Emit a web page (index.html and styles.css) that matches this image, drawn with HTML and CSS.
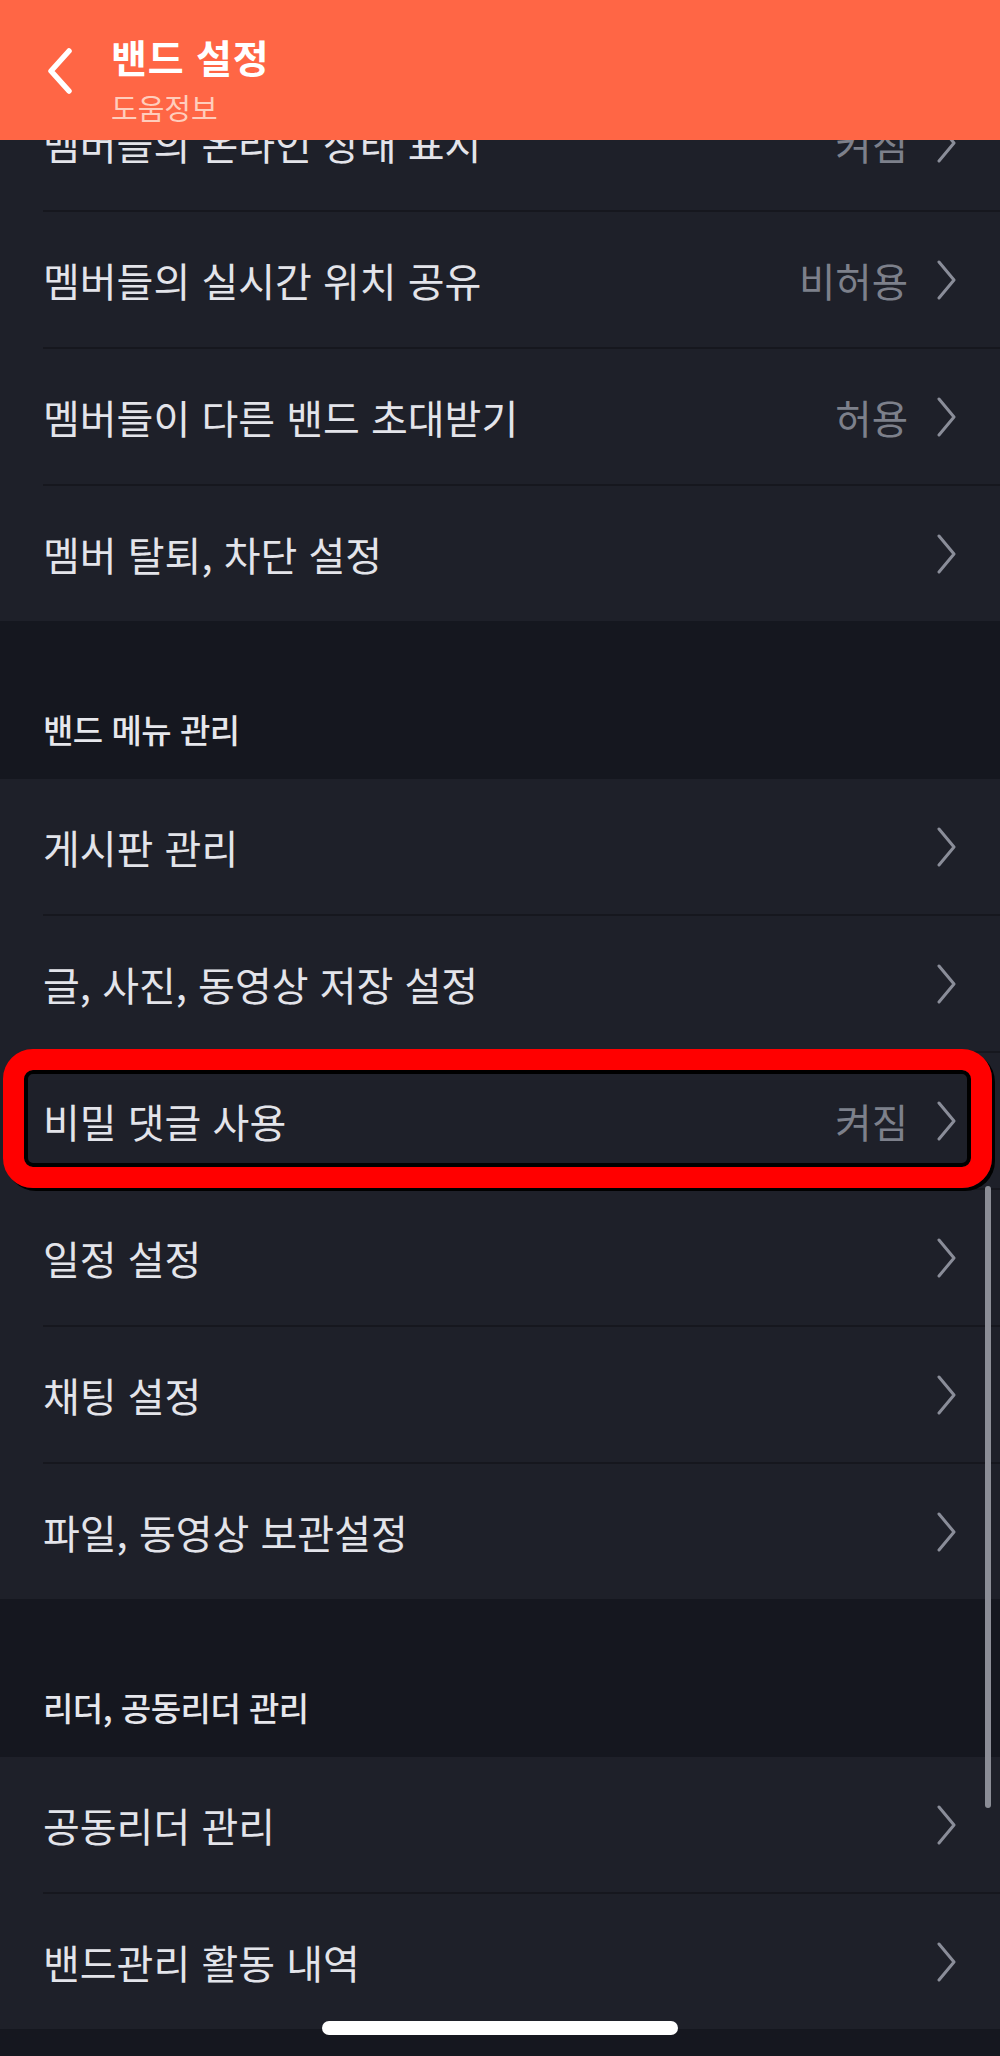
FILE: index.html
```html
<!DOCTYPE html>
<html lang="ko">
<head>
<meta charset="utf-8">
<title>밴드 설정</title>
<link rel="stylesheet" href="styles.css">
</head>
<body>
<header class="topbar">
  <svg class="back" width="26" height="46" viewBox="0 0 26 46"><polyline points="22,3 4,23 22,43" fill="none" stroke="#ffffff" stroke-width="5.5" stroke-linecap="round" stroke-linejoin="round"/></svg>
  <div class="titles">
    <div class="title">밴드 설정</div>
    <div class="subtitle">도움정보</div>
  </div>
</header>

<main class="page">
  <section class="group">
    <div class="row"><span class="label">멤버들의 온라인 상태 표시</span><span class="value">켜짐</span><svg class="chev" width="22" height="40" viewBox="0 0 22 40"><polyline points="4,2 19,20 4,38" fill="none" stroke="#8a8d99" stroke-width="3" stroke-linecap="round" stroke-linejoin="round"/></svg></div>
    <div class="row"><span class="label">멤버들의 실시간 위치 공유</span><span class="value">비허용</span><svg class="chev" width="22" height="40" viewBox="0 0 22 40"><polyline points="4,2 19,20 4,38" fill="none" stroke="#8a8d99" stroke-width="3" stroke-linecap="round" stroke-linejoin="round"/></svg></div>
    <div class="row"><span class="label">멤버들이 다른 밴드 초대받기</span><span class="value">허용</span><svg class="chev" width="22" height="40" viewBox="0 0 22 40"><polyline points="4,2 19,20 4,38" fill="none" stroke="#8a8d99" stroke-width="3" stroke-linecap="round" stroke-linejoin="round"/></svg></div>
    <div class="row"><span class="label">멤버 탈퇴, 차단 설정</span><svg class="chev" width="22" height="40" viewBox="0 0 22 40"><polyline points="4,2 19,20 4,38" fill="none" stroke="#8a8d99" stroke-width="3" stroke-linecap="round" stroke-linejoin="round"/></svg></div>
  </section>

  <h2 class="section-title">밴드 메뉴 관리</h2>
  <section class="group">
    <div class="row"><span class="label">게시판 관리</span><svg class="chev" width="22" height="40" viewBox="0 0 22 40"><polyline points="4,2 19,20 4,38" fill="none" stroke="#8a8d99" stroke-width="3" stroke-linecap="round" stroke-linejoin="round"/></svg></div>
    <div class="row"><span class="label">글, 사진, 동영상 저장 설정</span><svg class="chev" width="22" height="40" viewBox="0 0 22 40"><polyline points="4,2 19,20 4,38" fill="none" stroke="#8a8d99" stroke-width="3" stroke-linecap="round" stroke-linejoin="round"/></svg></div>
    <div class="row highlighted"><span class="label">비밀 댓글 사용</span><span class="value">켜짐</span><svg class="chev" width="22" height="40" viewBox="0 0 22 40"><polyline points="4,2 19,20 4,38" fill="none" stroke="#8a8d99" stroke-width="3" stroke-linecap="round" stroke-linejoin="round"/></svg></div>
    <div class="row"><span class="label">일정 설정</span><svg class="chev" width="22" height="40" viewBox="0 0 22 40"><polyline points="4,2 19,20 4,38" fill="none" stroke="#8a8d99" stroke-width="3" stroke-linecap="round" stroke-linejoin="round"/></svg></div>
    <div class="row"><span class="label">채팅 설정</span><svg class="chev" width="22" height="40" viewBox="0 0 22 40"><polyline points="4,2 19,20 4,38" fill="none" stroke="#8a8d99" stroke-width="3" stroke-linecap="round" stroke-linejoin="round"/></svg></div>
    <div class="row"><span class="label">파일, 동영상 보관설정</span><svg class="chev" width="22" height="40" viewBox="0 0 22 40"><polyline points="4,2 19,20 4,38" fill="none" stroke="#8a8d99" stroke-width="3" stroke-linecap="round" stroke-linejoin="round"/></svg></div>
  </section>

  <h2 class="section-title">리더, 공동리더 관리</h2>
  <section class="group">
    <div class="row"><span class="label">공동리더 관리</span><svg class="chev" width="22" height="40" viewBox="0 0 22 40"><polyline points="4,2 19,20 4,38" fill="none" stroke="#8a8d99" stroke-width="3" stroke-linecap="round" stroke-linejoin="round"/></svg></div>
    <div class="row"><span class="label">밴드관리 활동 내역</span><svg class="chev" width="22" height="40" viewBox="0 0 22 40"><polyline points="4,2 19,20 4,38" fill="none" stroke="#8a8d99" stroke-width="3" stroke-linecap="round" stroke-linejoin="round"/></svg></div>
  </section>
</main>

<div class="scrollbar"></div>
<div class="home-indicator"></div>
</body>
</html>
```

FILE: styles.css
```css
html, body {
  margin: 0;
  padding: 0;
}

body {
  background: #15171f;
  font-family: "Noto Sans CJK KR", "Noto Sans", sans-serif;
  color: #e4e5ea;
  width: 1000px;
  height: 2056px;
  overflow: hidden;
  position: relative;
}

.topbar {
  position: absolute;
  top: 0;
  left: 0;
  right: 0;
  height: 140px;
  background: #ff6645;
  display: flex;
  align-items: center;
  padding-left: 47px;
  box-sizing: border-box;
  z-index: 10;
}

.back {
  display: block;
  margin-top: 2px;
}

.titles {
  margin-left: 38px;
  margin-top: 17px;
  display: flex;
  flex-direction: column;
  gap: 10px;
}

.title {
  color: #ffffff;
  font-size: 39px;
  font-weight: 700;
  line-height: 46px;
  letter-spacing: 0.8px;
}

.subtitle {
  color: #ffcdbc;
  font-size: 29px;
  font-weight: 400;
  line-height: 36px;
}

.page {
  padding-top: 75px;
}

.group {
  background: #1e2029;
}

.row {
  position: relative;
  height: 135px;
  margin-left: 43px;
  padding-right: 43px;
  display: flex;
  align-items: center;
  border-bottom: 2px solid #16171e;
}

.row:last-child {
  border-bottom: 0;
}

.label {
  flex: 1;
  font-size: 40px;
  line-height: 48px;
  color: #e3e4ea;
  white-space: nowrap;
}

.value {
  font-size: 39.5px;
  line-height: 48px;
  color: #7d808b;
  margin-right: 27px;
}

.chev {
  display: block;
  flex: none;
}

.section-title {
  margin: 0;
  height: 158px;
  box-sizing: border-box;
  padding-left: 43px;
  padding-bottom: 30px;
  display: flex;
  align-items: flex-end;
  font-size: 33px;
  font-weight: 500;
  line-height: 40px;
  color: #e6e7ec;
  letter-spacing: -0.5px;
}

.highlighted::after {
  content: "";
  position: absolute;
  left: -40px;
  top: -4px;
  width: 989px;
  height: 139px;
  box-sizing: border-box;
  border: 21px solid #ff0000;
  border-radius: 30px;
  box-shadow: inset 0 0 0 4px #000000, 3px 3px 0 0 #000000;
  z-index: 3;
}

.scrollbar {
  position: absolute;
  left: 985px;
  top: 1186px;
  width: 6px;
  height: 622px;
  border-radius: 3px;
  background: #8b8d96;
  z-index: 2;
}

.home-indicator {
  position: absolute;
  left: 322px;
  top: 2021px;
  width: 356px;
  height: 14px;
  border-radius: 7px;
  background: #ffffff;
  z-index: 5;
}
```
